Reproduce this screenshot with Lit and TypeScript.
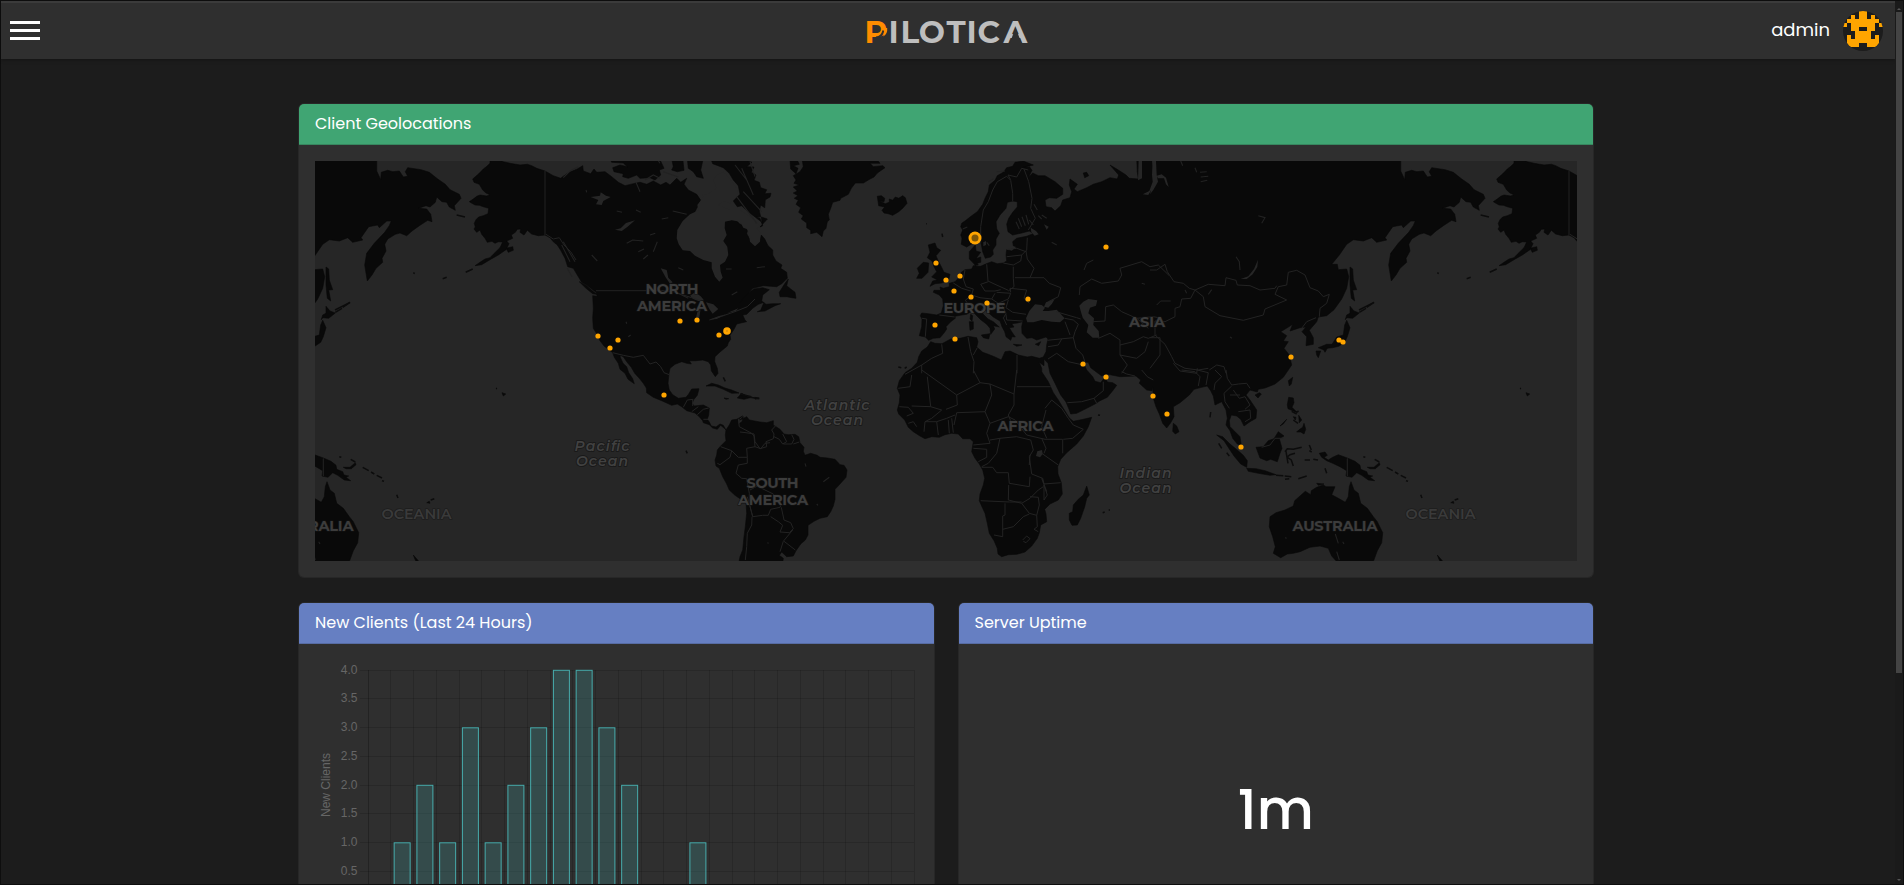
import { LitElement, html, css, svg } from 'lit';
import { customElement, property } from 'lit/decorators.js';

/** Map sheets are digitised at triple scale; each sheet has its own origin on the map. */
const SHEETS: Record<string, [number, number]> = {
  A: [-25, -66], B: [-25, 159], C: [425, -6], D: [425, 209], E: [835, -6], F: [835, 209],
};

/** Turns "A 1 2, 3 4 B 5 6" into SVG path data in map pixels. "|" starts a new sub-path. */
function trace(src: string, close: boolean): string {
  let origin = SHEETS.A;
  let out = '';
  for (const part of src.split('|')) {
    const tokens = part.replace(/,/g, ' ').trim().split(/\s+/);
    let first = true;
    for (let i = 0; i < tokens.length;) {
      if (SHEETS[tokens[i]]) { origin = SHEETS[tokens[i]]; i++; continue; }
      const x = origin[0] + Number(tokens[i]) / 3;
      const y = origin[1] + Number(tokens[i + 1]) / 3;
      out += `${first ? 'M' : 'L'}${x.toFixed(1)} ${y.toFixed(1)}`;
      first = false;
      i += 2;
    }
    if (close) out += 'Z';
  }
  return out;
}

const NORTH_AMERICA = `A 600 190, 600 205, 588 216, 580 222, 568 235, 548 252, 552 262, 568 268, 578 285, 588 294, 600 299, 590 303, 570 300, 560 304, 553 310, 538 320, 546 325, 555 330, 568 331, 580 335, 596 340, 594 356, 580 362, 566 366, 558 374, 553 385, 556 396, 552 402, 560 412, 570 405, 575 418, 585 430, 592 442, 606 439, 615 445, 625 440, 638 441, 630 458, 610 478, 600 488, 585 492, 570 502, 555 512, 575 509, 600 494, 625 480, 648 464, 657 446, 650 438, 668 430, 664 420, 676 412, 682 403, 692 402, 690 412, 702 420, 712 406, 725 417, 745 422, 765 420, 780 428, 790 440, 802 450, 812 466, 825 490, 833 515, 850 520, 862 540, 875 562, 890 570, 905 582, 918 592, 922 604, 908 602, 910 640, 908 670, 910 700, 920 716 B 922 45, 930 62, 942 78, 955 88, 968 98, 973 112, 985 130, 990 148, 1005 160, 1014 178, 1033 191, 1028 176, 1016 158, 1010 140, 999 130, 991 112, 990 106, 1000 110, 1010 125, 1024 142, 1034 160, 1048 175, 1060 190, 1069 204, 1070 218, 1090 232, 1115 242, 1145 256, 1162 252, 1175 260, 1190 272, 1215 279, 1228 290, 1238 302, 1240 308, 1258 314, 1268 324, 1282 328, 1292 316, 1303 325, 1308 330, 1300 316, 1290 312, 1278 321, 1264 318, 1258 306, 1252 298, 1256 285, 1258 264, 1240 255, 1213 258, 1206 250, 1212 238, 1222 226, 1227 206, 1205 207, 1196 222, 1188 232, 1165 235, 1148 224, 1138 210, 1134 190, 1137 160, 1140 145, 1155 133, 1175 125, 1190 130, 1204 132, 1198 122, 1218 122, 1238 120, 1255 125, 1262 135, 1264 152, 1276 170, 1284 160, 1282 145, 1274 125, 1275 110, 1290 96, 1312 78, 1315 68, 1322 58, 1320 46, 1332 28, 1340 12, 1356 8, 1370 5 C 15 495, 8 480, 20 478, 38 460, 55 448, 72 442, 62 466, 52 470, 75 468, 105 452, 122 446, 98 446, 78 448, 65 438, 68 420, 88 404, 68 398, 42 402, 22 416, 0 442, 15 425, 38 400, 70 392, 110 395, 125 386, 142 370, 140 352, 122 340, 126 330, 108 318, 98 300, 98 285, 84 272, 74 252, 64 240, 60 252, 54 266, 40 262, 28 250, 20 236, 24 220, 10 210, 0 208 A 1350 388, 1335 372, 1322 376, 1305 378, 1300 360, 1280 345, 1255 352, 1235 375, 1215 350, 1232 316, 1220 298, 1195 285, 1182 268, 1190 250, 1172 262, 1160 250, 1140 270, 1128 262, 1112 270, 1090 258, 1070 268, 1050 262, 1030 266, 1005 272, 985 262, 965 245, 945 230, 920 232, 912 222, 902 236, 880 228, 878 212, 862 222, 838 232, 820 244, 812 250, 790 242, 765 228, 740 220, 725 212, 712 208, 690 210, 660 205, 640 200, 620 190 |
A 960 190, 965 202, 1000 204, 1012 215, 990 210, 968 218, 972 230, 1000 236, 998 245, 1015 250, 1040 240, 1050 250, 1080 248, 1095 255, 1112 240, 1108 225, 1122 220, 1108 190 |
A 1145 190, 1150 215, 1145 225, 1162 230, 1182 226, 1178 190 | A 1192 190, 1195 220, 1210 230, 1220 245, 1240 250, 1232 225, 1240 190 |
A 1262 190, 1268 206, 1300 218, 1318 235, 1330 255, 1345 272, 1350 298, 1330 318, 1342 335, 1355 332, 1375 350, 1398 368, 1416 382, 1414 366, 1432 372 C 60 216, 68 212, 60 190, 48 186, 62 185, 58 168, 62 150, 74 158, 76 134, 90 126, 93 115, 74 116, 80 104, 62 98, 58 82, 42 76, 48 60, 34 52, 42 36, 20 35, 36 22, 0 10 |
A 1308 265, 1320 260, 1328 275, 1318 285, 1310 280 | A 1250 345, 1262 355, 1258 365, 1248 360 |
A 868 560, 890 572, 905 586, 920 598, 908 596, 888 580 |
C 120 425, 118 412, 135 385, 145 372, 140 392, 152 402, 165 412, 168 430, 155 428, 140 425 |
A 648 460, 668 455, 670 466, 655 472`;

const GREENLAND_ICELAND = `C 186 10, 190 35, 180 50, 160 62, 168 75, 162 85, 178 90, 160 96, 172 108, 160 114, 174 122, 163 130, 175 136, 168 148, 182 158, 176 172, 190 182, 184 192, 200 204, 200 218, 212 226, 212 236, 230 232, 246 245, 250 228, 258 220, 262 200, 268 195, 265 178, 272 160, 278 142, 300 136, 302 130, 325 118, 334 100, 346 84, 370 84, 390 72, 402 66, 412 54, 435 38, 428 32, 400 35, 390 25, 420 25, 408 10 |
C 150 15, 152 42, 168 56, 174 40, 160 32, 178 28, 170 12 |
C 412 124, 424 122, 434 130, 432 140, 418 138, 436 146, 448 142, 448 132, 458 136, 466 126, 476 130, 488 122, 496 128, 501 145, 488 160, 476 170, 458 181, 445 176, 432 174, 426 166, 434 156, 416 152`;

const SOUTH_AMERICA = `B 1308 330, 1306 345, 1308 362, 1290 380, 1282 390, 1280 405, 1275 420, 1278 438, 1288 445, 1298 470, 1310 492, 1318 510, 1335 526, 1350 536, 1368 545, 1370 580, 1366 620, 1362 650, 1358 690, 1350 710, 1346 730 D 128 580, 130 565, 118 556, 125 546, 140 560, 160 558, 168 542, 182 522, 196 510, 204 495, 204 466, 222 454, 240 445, 262 440, 272 425, 280 408, 285 388, 285 358, 300 342, 318 322, 321 300, 312 286, 300 284, 285 268, 262 264, 240 262, 232 256, 212 250, 195 256, 190 244, 192 232, 180 218, 176 200, 165 193, 145 194, 132 192, 120 178, 100 165, 100 152, 80 158, 60 156, 40 152, 28 150, 20 140, 0 150 B 1360 290, 1356 305, 1345 312, 1348 296, 1358 288, 1340 298, 1325 300, 1318 315`;

const AFRO_EURASIA = `C 665 205, 662 215, 668 225, 662 240, 666 250, 664 268, 680 276, 700 264, 715 256, 724 268, 728 290, 736 310, 752 306, 760 298, 758 285, 768 270, 768 252, 778 235, 770 222, 768 200, 780 180, 798 160, 802 142, 818 138, 832 140, 832 156, 818 172, 806 190, 800 208, 804 230, 818 240, 845 234, 868 228, 880 236, 860 244, 830 250, 818 260, 820 272, 830 276, 815 288, 800 284, 798 300, 800 318, 790 324, 772 326, 755 320, 735 328, 722 334, 708 334, 698 322, 688 312, 688 290, 706 270, 708 288, 722 292, 712 305, 706 318, 715 330, 700 332, 695 342, 675 344, 664 352, 655 370, 645 380, 628 385, 628 395, 610 400, 600 396, 602 406, 582 406, 580 412, 598 420, 608 432, 610 452, 604 474, 590 480, 565 476, 545 474, 541 482, 546 492, 545 515, 538 542, 556 546, 566 556, 580 550, 600 548, 612 534, 620 522, 618 515, 632 500, 646 490, 645 484, 665 480, 680 478, 696 468, 706 478, 722 494, 740 508, 750 520, 752 538, 764 522, 760 512, 778 516, 760 500, 744 492, 730 478, 722 466, 728 458, 742 470, 760 486, 780 498, 786 515, 794 530, 798 545, 812 556, 816 545, 826 546, 815 530, 808 518, 822 516, 815 506, 832 504, 848 500, 845 515, 846 535, 860 550, 876 548, 890 555, 918 546, 924 552, 920 570, 918 590, 910 606, 898 610, 875 604, 862 606, 835 600, 810 588, 795 590, 784 615, 765 606, 745 598, 728 592, 710 576, 714 560, 710 548, 684 544, 660 550, 632 552, 606 566, 585 565, 572 560, 562 576, 545 588, 536 605, 532 622, 515 640 D 495 8, 478 32, 472 55, 480 75, 478 98, 472 120, 476 132, 494 150, 505 172, 520 185, 540 198, 555 206, 575 200, 598 202, 615 194, 635 190, 655 192, 668 206, 690 206, 700 215, 695 245, 705 265, 718 282, 728 300, 734 325, 730 345, 720 372, 718 392, 735 430, 742 460, 748 490, 762 512, 772 535, 774 552, 785 560, 805 554, 830 553, 855 546, 875 528, 892 505, 898 488, 902 465, 920 455, 918 432, 914 418, 930 402, 955 390, 967 372, 964 338, 954 312, 953 290, 962 268, 980 248, 1010 222, 1030 198, 1045 170, 1055 142, 1030 148, 1000 154, 988 144, 970 115, 955 90, 940 68, 925 35, 905 5 C 905 640, 898 622, 912 632, 912 612, 924 625, 930 655 D 945 40, 962 75, 978 96, 988 120, 992 132, 1010 130, 1040 115, 1065 102, 1080 92, 1102 82, 1118 62, 1130 46, 1118 38, 1102 36, 1096 22, 1090 28, 1082 38, 1065 34, 1058 20, 1040 0 C 1036 636, 1028 622, 1045 622, 1052 638, 1068 650 D 1085 18, 1100 12, 1140 20, 1188 18, 1202 30, 1198 40, 1220 60, 1236 62 F 8 50, 10 85, 18 110, 28 132, 38 160, 50 174, 62 158, 72 140, 70 110, 90 98, 118 75, 132 58, 155 52, 172 48, 182 62, 190 78, 195 105, 215 95, 228 120, 232 145, 228 165, 240 182, 248 205, 262 222, 274 226, 270 200, 252 182, 240 170, 238 152, 244 135, 260 138, 272 148, 282 168, 300 155, 318 145, 320 120, 300 90, 288 75, 300 60, 322 66, 325 58, 345 54, 375 42, 400 22, 415 0 E 425 630, 418 600, 402 580, 415 560, 400 558, 410 542, 392 530, 412 518, 428 508, 420 528, 450 518, 468 516, 456 530, 470 545, 468 572, 490 568, 490 548, 478 526, 500 500, 505 486, 530 482, 552 464, 575 432, 590 400, 596 365, 590 342, 565 344, 562 328, 545 328, 568 300, 590 268, 610 254, 640 258, 665 248, 680 262, 710 255, 705 248, 728 215, 755 210, 760 218, 782 198, 796 198, 790 212, 776 232, 745 265, 722 295, 716 330, 724 378, 738 360, 750 340, 770 322, 768 310, 780 288, 776 268, 785 252, 808 238, 822 234, 842 242, 858 228, 880 212, 905 196, 918 200, 914 178, 902 162, 878 160, 900 152, 912 156, 928 142, 932 126, 948 140, 962 142, 970 156, 988 166, 985 152, 1005 130, 1000 118, 972 104, 958 88, 935 72, 910 52, 885 44, 845 38, 838 50, 845 64, 832 66, 820 48, 800 50, 785 46, 766 52, 764 74, 752 48, 752 10 C 1190 10, 1192 50, 1195 72, 1168 70, 1158 60, 1130 42, 1110 30, 1136 60, 1132 72, 1110 68, 1085 80, 1060 88, 1040 98, 1012 110, 1002 102, 1012 88, 990 72, 988 90, 995 110, 990 128, 968 135, 962 152, 945 168, 935 158, 918 155, 915 135, 928 128, 950 130, 968 118, 968 100, 945 80, 915 62, 895 62, 878 54, 865 68, 876 46, 866 32, 848 38, 880 30, 850 18, 825 22, 818 34, 800 38, 790 52, 772 62, 765 76, 748 90, 745 110, 736 128, 728 148, 712 170, 690 186, 678 196 |
C 565 270, 585 264, 590 278, 602 286, 588 302, 595 318, 604 335, 612 352, 630 358, 626 375, 605 384, 585 386, 570 394, 578 378, 592 374, 575 366, 590 350, 582 335, 576 318, 562 308, 570 292 |
C 550 322, 566 324, 564 352, 546 370, 530 370, 538 355, 532 340 | C 712 310, 722 306, 722 322, 708 326, 700 316 |
C 688 500, 700 500, 700 522, 690 526 | C 692 478, 698 482, 696 498, 690 492 | C 724 540, 750 536, 746 552, 730 548 | C 820 568, 846 570, 830 574 | C 886 568, 902 560, 896 572 |
C 1030 54, 1040 52, 1046 62, 1034 68 |
E 600 336, 608 342, 610 375, 620 404, 608 405, 614 438, 604 430, 600 390 | E 600 454, 612 468, 628 474, 608 490, 590 488, 586 494, 590 480, 600 475 | E 590 496, 600 518, 592 545, 584 562, 566 574, 548 578, 530 580, 520 584, 505 578, 530 568, 546 568, 560 546, 580 540, 584 510 | E 498 588, 512 588, 505 608, 500 600 | E 520 582, 532 580, 525 592`;

const SOUTHERN_ISLANDS = `F 415 32, 428 22, 424 42, 418 48 | F 315 75, 328 68, 334 72, 324 84 | F 416 82, 430 84, 432 98, 426 112, 434 120, 442 128, 428 122, 414 116, 412 104 | F 446 180, 458 172, 462 160, 467 178, 462 192, 452 186, 440 186 | F 430 140, 438 142, 436 150 | F 446 136, 455 150, 448 158 | F 390 168, 410 148, 400 162 | F 70 160, 80 168, 87 185, 76 192, 68 184 |
F 200 195, 218 200, 240 222, 262 240, 280 256, 292 272, 290 292, 272 282, 252 258, 240 240, 222 212 | F 290 295, 318 296, 345 302, 378 314, 360 316, 325 310, 295 304 |
F 318 232, 340 230, 355 212, 372 206, 385 185, 402 198, 388 206, 396 235, 390 250, 382 275, 362 268, 350 272, 330 264 |
F 508 250, 525 246, 532 256, 522 262, 535 270, 548 262, 565 254, 592 264, 615 274, 630 286, 632 298, 650 305, 655 318, 674 332, 655 330, 635 316, 620 308, 606 322, 588 318, 590 302, 570 290, 548 280, 530 272, 515 262 |
F 652 292, 672 292, 688 278, 690 284, 676 296, 660 296 | F 640 312, 668 318, 660 322 |
F 360 440, 378 428, 405 420, 430 408, 434 392, 450 378, 466 364, 482 374, 484 362, 500 352, 520 345, 528 350, 555 350, 545 374, 565 385, 586 397, 595 380, 598 350, 603 335, 612 360, 625 370, 632 400, 652 415, 670 440, 682 455, 698 488, 695 518, 682 542, 668 580, 565 580, 545 558, 535 535, 510 528, 480 532, 450 545, 430 550, 412 552, 392 563, 370 550, 376 530, 368 500, 358 470 |
F 500 340, 522 342, 505 346 | F 862 555, 868 562, 877 572, 874 580, 868 570 |
D 988 430, 998 425, 1000 405, 1015 388, 1030 375, 1040 348, 1048 375, 1040 385, 1034 410, 1022 445, 1012 465, 996 466, 988 450 |
B 1248 198, 1265 190, 1285 195, 1305 204, 1325 210, 1347 219, 1325 220, 1300 208, 1275 198 | B 1342 234, 1355 220, 1370 228, 1385 232, 1362 238 | B 1302 234, 1316 236, 1308 238 | B 1394 232, 1408 234, 1396 238 | B 636 218, 647 222, 640 228 | F 902 398, 910 394, 912 400`;

const WATER = `A 1160 430, 1162 405, 1178 378, 1200 358, 1226 346, 1222 330, 1240 306, 1235 300, 1255 296, 1280 280, 1270 255, 1280 240, 1300 230, 1318 250, 1340 280, 1345 300, 1320 325, 1300 318, 1285 330, 1320 345, 1350 345, 1395 375, 1410 395, 1400 400, 1412 415, 1410 440, 1395 454, 1380 440, 1376 412, 1370 402, 1360 398, 1350 380, 1325 376, 1305 380, 1304 400, 1310 420, 1300 438, 1312 455, 1315 480, 1305 500, 1290 510, 1292 530, 1298 548, 1288 560, 1275 545, 1265 520, 1265 502, 1240 495, 1215 482, 1200 468, 1178 466, 1166 448 |
A 1200 602, 1215 592, 1232 604, 1242 616, 1225 618, 1210 612 | A 1225 638, 1232 640, 1228 668, 1218 668 | A 1248 622, 1270 628, 1285 642, 1268 656, 1258 642 | A 1258 674, 1285 664, 1308 658, 1280 672 | A 1312 654, 1345 640, 1338 648 | A 1112 520, 1130 525, 1135 548, 1148 562, 1140 566, 1126 545 |
A 902 306, 930 302, 932 292, 948 302, 962 306, 940 318, 935 330, 918 328, 925 315 | A 975 404, 992 400, 1008 384, 1035 376, 1012 396, 995 408 |
C 858 490, 868 468, 885 448, 905 450, 915 458, 908 468, 925 468, 950 464, 974 490, 960 502, 935 500, 905 495, 880 502, 862 502 | C 912 455, 918 442, 944 432, 936 446, 925 458 | C 1018 452, 1030 440, 1045 432, 1072 436, 1068 452, 1050 458, 1045 475, 1062 490, 1060 510, 1076 528, 1078 548, 1058 548, 1040 532, 1045 510, 1028 488, 1022 468 |
C 872 218, 888 228, 896 238, 884 242, 874 232 | C 912 208, 926 215, 920 224 | C 730 262, 738 258, 738 270, 730 274 |
D 892 244, 906 240, 908 252, 900 262, 888 258 | E 272 372, 295 364, 312 342, 324 314, 322 336, 308 358, 290 372 |
C 1238 10, 1240 50, 1250 60, 1245 85, 1225 120, 1208 118, 1228 108, 1238 80, 1236 60 | E 6 15, 18 18, 20 60, 24 80, 10 105, 0 118, 10 80 | C 1196 10, 1206 18, 1206 70, 1194 76 | E 20 62, 35 58, 48 68, 56 96, 48 88, 42 70, 24 70`;

/** Thin coastal features, drawn in the land colour. */
const ISLAND_CHAINS = `A 458 551, 470 547 | A 527 532, 548 522 | A 135 645, 180 622 | E 628 472, 648 460 | E 650 457, 672 442 | F 378 316, 400 317 | F 404 318, 424 320 | F 405 328, 418 326 | F 445 326, 470 318 | F 405 245, 412 236, 430 238, 455 232 | F 408 244, 414 280 | F 410 262, 420 254, 435 250 | F 412 262, 424 270, 430 288 | F 478 225, 484 240 | F 478 242, 485 246 | F 464 270, 480 270 | F 490 268, 504 270 | F 525 295, 530 310 | F 710 292, 728 302 | F 735 306, 745 312 | F 752 316, 768 324 | F 768 332, 774 334 | F 812 374, 816 384 | F 914 390, 925 386 | F 206 220, 215 235 | F 230 248, 238 258 | F 640 260, 646 262 | F 674 268, 688 276 | F 425 124, 440 132 | F 438 126, 446 124 | F 430 150, 444 160 | F 182 126, 180 142 | B 1300 172, 1306 184 | C 475 636, 484 638 | C 494 640, 500 636 | C 558 206, 560 206 | C 606 236, 608 246 | D 1088 428, 1094 426 | D 1106 420, 1110 420 | D 1074 135, 1080 136 | B 618 205, 621 206 | B 1188 392, 1192 400 | A 500 360, 525 366 | A 370 533, 374 536 | D 30 82, 58 86 | D 0 72, 34 80`;

const BORDERS = `A 765 228, 765 420 | A 768 418, 790 432, 808 428, 822 450, 842 470, 858 495 | A 918 587, 1115 587, 1150 590, 1180 600, 1205 608, 1235 618 | A 1258 675, 1295 664, 1340 648, 1372 635, 1395 612 | B 968 98, 1000 106, 1030 112, 1060 106, 1080 132, 1098 126, 1112 140, 1122 158, 1138 164 |
B 1180 262, 1192 240, 1210 238 | B 1208 238, 1208 258 | B 1205 275, 1225 260 | B 1222 284, 1240 268, 1256 264 | B 1240 298, 1254 298 |
B 1345 296, 1348 320, 1385 340, 1392 348, 1395 380, 1370 385, 1372 412 | B 1292 380, 1325 392, 1345 412, 1372 412 | B 1325 392, 1320 412, 1290 434, 1282 430 | B 1372 412, 1372 430, 1345 435, 1338 460, 1355 475, 1370 476 | B 1395 380, 1412 386, 1425 370, 1440 368 | B 1370 476, 1378 520, 1378 550, 1388 590 |
D 0 186, 18 188, 42 192, 45 215, 60 236, 80 230, 78 215, 100 206, 102 192, 95 180, 108 166 | D 102 200, 118 208, 128 222, 140 215, 128 192 | D 130 222, 155 222, 162 208, 155 194 | D 160 222, 178 216 | D 30 360, 52 348, 75 360, 100 372, 108 396, 124 402, 120 412, 92 418, 85 436, 68 436, 38 440, 30 410, 22 380 | D 36 440, 35 465, 22 490, 20 530, 16 570 | D 92 440, 115 455, 128 466, 120 486, 148 488, 160 476, 152 458, 132 450, 124 412 | D 158 480, 130 514, 120 545 | D 132 514, 166 540 |
C 722 266, 722 215, 730 165, 745 140, 758 105, 772 80, 800 64, 812 76, 818 115, 818 138 | C 812 74, 804 60, 830 66, 845 40, 865 45 | C 852 42, 866 80, 876 130, 872 160, 886 190, 865 225 | C 862 248, 860 285, 845 300, 800 305 | C 800 284, 830 280, 858 290 | C 790 324, 820 330, 842 318, 845 300 | C 820 335, 820 370, 822 395, 805 408 | C 858 288, 862 312, 882 340, 870 368, 825 368 | C 740 328, 744 378, 765 388, 805 406 | C 675 345, 670 372, 678 395, 700 402, 695 420 | C 722 388, 745 380 | C 722 388, 735 408, 765 408, 782 404 | C 640 384, 665 400, 692 408 | C 695 420, 720 428, 755 432, 765 415 | C 680 472, 685 448, 676 436, 695 420 | C 755 432, 775 445, 805 432, 812 415, 770 412 | C 812 412, 810 400, 860 405, 852 430, 868 445 | C 870 368, 912 368, 928 385, 962 398, 955 425, 925 440 | C 805 435, 798 458, 818 472, 858 478 | C 765 455, 785 450, 798 475, 790 490 | C 798 478, 800 495, 848 498 | C 790 488, 800 510 | C 546 490, 560 492, 556 545 | C 598 480, 644 486 |
C 974 490, 1000 495, 1015 508, 1005 530, 1000 548, 960 552, 922 556 | C 948 470, 1010 488, 1022 492 | C 975 500, 990 540 | C 924 575, 955 570, 965 552 | C 924 612, 950 595, 985 620, 1030 630 | C 1000 548, 1008 580, 1028 600, 1035 622 | C 1075 550, 1110 535, 1140 555, 1140 600, 1162 630, 1145 655 | C 1140 570, 1180 560, 1210 545, 1225 550, 1250 540 | C 1058 500, 1095 498, 1097 455, 1120 450, 1145 470, 1190 490, 1225 520 | C 1140 600, 1190 610, 1215 590, 1225 560 | C 1018 420, 1020 395, 1055 372, 1085 385, 1135 378, 1145 360, 1140 340, 1205 320, 1230 335, 1255 330, 1288 362 | C 1032 345, 1040 325, 1060 315 | C 1190 490, 1240 485, 1265 490 |
E 0 345, 20 345, 45 328, 52 350, 72 380, 100 385, 118 400, 135 405, 175 388, 225 392, 228 368, 258 376, 262 390, 300 392, 330 405, 375 400, 380 392 | E 135 405, 160 425, 165 455, 210 482, 280 496, 340 480, 345 462, 410 435, 375 418, 385 395, 410 390, 415 352, 440 346, 465 360, 480 398, 505 408, 520 425, 538 418, 530 445, 510 460, 508 485 | E 135 405, 122 430, 95 432, 90 455, 75 460, 75 485, 45 500, 15 498, 15 540, 45 568 | E 20 450, 32 438, 62 438 | E 0 548, 30 548, 30 600, 0 640 | E 45 568, 65 605, 75 625, 105 640, 145 645, 175 640 | E 70 625, 90 648, 140 655, 142 640 | E 178 645, 200 630, 222 635, 228 655 | E 455 520, 470 500, 498 488 |
F 95 0, 135 5, 150 20, 145 48 | F 142 0, 175 8, 168 45 | F 195 0, 215 20, 195 40, 192 60 | F 228 0, 232 25, 245 45, 265 42, 290 40, 300 55 | F 245 48, 222 70, 225 95, 238 115 | F 250 60, 268 85, 285 80, 300 105, 285 118 | F 240 75, 270 75 | F 265 125, 300 120, 302 145, 285 155 | F 335 232, 360 225, 375 205, 400 205 | F 592 265, 592 318 |
C 605 568, 608 595, 575 610, 545 630, 545 655 | C 684 546, 692 590, 702 620, 700 655 | C 712 578, 700 600 | C 831 600, 831 655 | C 545 630, 495 658 |
D 545 0, 650 75, 720 38, 700 0 | D 515 15, 510 50, 475 55 | D 562 20, 572 110, 515 108 | D 650 75, 652 105, 618 118 | D 572 110, 605 120, 575 145, 555 155, 552 185 | D 720 38, 750 42, 822 72, 830 0 | D 750 42, 755 75, 735 125, 650 128, 642 165 | D 831 50, 932 50 | D 822 72, 822 105, 805 135, 815 160 | D 735 125, 750 160, 740 190, 750 220, 700 225 | D 750 160, 805 140, 825 150 | D 555 155, 590 155, 620 145, 645 135 | D 590 155, 595 195 | D 625 150, 628 190 | D 635 145, 640 188 | D 505 160, 520 155, 530 170 | D 478 110, 505 112, 520 130, 500 138 | D 750 210, 780 205, 830 200, 872 210 | D 780 205, 770 250, 745 280, 725 290 | D 700 235, 740 238, 740 262, 715 275 | D 725 292, 758 292, 770 308, 805 308, 808 340, 868 350, 870 320 | D 872 210, 880 240, 868 260, 875 312, 908 325, 912 342, 962 338 | D 905 250, 955 285 | D 905 205, 918 235, 912 250 | D 825 150, 860 195, 915 208, 968 208, 968 250 | D 915 115, 935 90, 965 115, 985 145, 1000 165, 1030 178, 998 205, 970 208 | D 918 120, 905 170, 920 205 | D 806 345, 805 390, 845 400, 870 385, 895 360, 910 350 | D 722 392, 808 396, 845 396 | D 795 400, 795 435, 788 438, 788 500, 762 495 | D 845 400, 868 430, 890 436, 898 405, 895 382, 870 380 | D 788 478, 820 470, 850 440, 868 432 | D 890 436, 892 470, 882 478, 895 485 | D 848 510, 860 498, 870 506, 858 518, 850 514 | D 982 98, 1025 95, 1062 85, 1090 62, 1090 35 | D 1062 85, 1070 100 | D 912 345, 922 375, 912 390, 912 345 |
D 1145 5, 1160 12, 1185 18 | D 1205 0, 1222 20, 1240 30`;

/** Small inland lakes and inlets, drawn in the water colour. */
const INLETS = `A 1010 445, 1028 435, 1060 438 | A 1045 470, 1062 462 | A 1090 470, 1102 440 | A 1060 492, 1074 480 | A 1115 372, 1135 368 | A 1148 348, 1190 358 | A 905 480, 922 498 | A 980 348, 996 352 | A 1038 345, 1052 352 | A 888 285, 890 292 | A 1308 522, 1325 522 | A 1400 518, 1425 515 | A 1325 600, 1342 590 | A 1080 420, 1096 415 | A 1008 680, 1010 686 | A 1165 518, 1180 525 | A 1195 610, 1165 595 | A 820 248, 840 228, 865 215 | A 1100 190, 1110 205 | A 1120 230, 1165 246 | A 1065 255, 1090 240, 1110 250 | A 1038 262, 1050 290 | A 1335 210, 1370 255 | A 1355 220, 1390 300 | A 1380 200, 1395 245 | A 1340 305, 1400 385 | A 1360 290, 1415 350 | A 815 450, 840 500 | A 820 440, 855 500 | A 832 520, 846 545 |
C 835 190, 845 215 | C 846 185, 856 212 | C 858 180, 866 208 | C 868 195, 880 210 | C 828 200, 838 222 | C 895 182, 905 192 | C 882 148, 892 165 | C 905 180, 920 190 | C 935 262, 950 270 | C 745 80, 760 72 | C 770 50, 795 48 | C 668 222, 682 216 | C 740 262, 748 272 | C 1205 385, 1215 388 |
E 135 38, 140 52 | E 150 52, 170 50 | E 152 66, 175 64 | E 152 80, 172 76 | E 92 18, 98 32 | E 258 305, 268 320, 270 345 | E 325 182, 345 188, 335 205 | E 240 546, 246 550 | E 105 405, 110 415 | E 175 418, 185 404 | D 870 255, 868 285 | D 905 325, 920 365 | D 250 335, 268 322 | D 230 402, 234 406 | D 82 518, 86 520 | D 195 280, 198 290 | B 1015 50, 1022 45 | F 556 492, 565 520 | F 560 545, 568 570 | F 578 515, 582 522 | F 405 503, 410 505`;

const PINS: Array<[number, number, number?]> = [
  [598, 336], [618, 340], [610, 348], [680, 321], [697, 320], [719, 335], [664, 395],
  [936, 263], [946, 280], [960, 276], [954, 291], [971, 297], [987, 303], [1028, 299], [935, 325], [955, 339],
  [1106, 247], [1083, 364], [1106, 377], [1153, 396], [1167, 414], [1241, 447], [1291, 357], [1339, 340], [1343, 342],
  [727, 331, 1], [975, 238, 2],
];

interface Label { t: string; x: number; y: number; w: number; k: string }
const LABELS: Label[] = [
  { t: 'NORTH', x: 672, y: 294, w: 53, k: 'land' }, { t: 'AMERICA', x: 672, y: 311, w: 70, k: 'land' },
  { t: 'SOUTH', x: 772.5, y: 487.5, w: 52, k: 'land' }, { t: 'AMERICA', x: 773, y: 504.5, w: 70, k: 'land' },
  { t: 'EUROPE', x: 974.5, y: 313, w: 62, k: 'land' }, { t: 'ASIA', x: 1147, y: 327, w: 36, k: 'land' },
  { t: 'AFRICA', x: 1025.5, y: 430.5, w: 56, k: 'land' }, { t: 'AUSTRALIA', x: 1335, y: 531, w: 85, k: 'land' },
  { t: 'AUSTRALIA', x: 311, y: 531, w: 85, k: 'land' },
  { t: 'OCEANIA', x: 416.5, y: 519, w: 70, k: 'region' }, { t: 'OCEANIA', x: 1440.5, y: 519, w: 70, k: 'region' },
  { t: 'Pacific', x: 602, y: 451, w: 55, k: 'sea' }, { t: 'Ocean', x: 602, y: 466, w: 52, k: 'sea' },
  { t: 'Atlantic', x: 837, y: 410, w: 65, k: 'sea' }, { t: 'Ocean', x: 837, y: 425, w: 52, k: 'sea' },
  { t: 'Indian', x: 1145.5, y: 478, w: 52, k: 'sea' }, { t: 'Ocean', x: 1145.5, y: 493, w: 52, k: 'sea' },
];

@customElement('geo-map')
class GeoMap extends LitElement {
  static styles = css`
    :host { display: block; height: 400px; background: #262626; overflow: hidden; }
    svg { display: block; width: 100%; height: 100%; }
    .earth { fill: #090909; stroke: #090909; stroke-width: 0.6; stroke-linejoin: round; }
    .water { fill: #262626; }
    .border { fill: none; stroke: #232323; stroke-width: 1; stroke-linejoin: round; }
    .chain { fill: none; stroke: #0c0c0c; stroke-width: 1.5; }
    .inlet { fill: none; stroke: #222; stroke-width: 1.1; }
    text { font-family: Montserrat, Inter, sans-serif; text-anchor: middle; paint-order: stroke; stroke-linejoin: round; }
    .land { font-size: 14.5px; font-weight: 700; fill: #3c3c3c; stroke: #131313; stroke-width: 1.2px; }
    .region { font-size: 14.5px; font-weight: 600; fill: #3a3a3a; stroke: #1d1d1d; stroke-width: 1.6px; }
    .sea { font-size: 14px; font-style: italic; font-weight: 600; fill: #414141; stroke: #191919; stroke-width: 1.8px; }
    .pin { fill: orange; }
    .core { fill: #7e5608; }
    .soft { fill: #d98f0c; }
  `;
  render() {
    return html`<svg viewBox="0 0 1262 400">
      <defs>
        <g id="world">
          <path class="earth" d=${trace([NORTH_AMERICA, GREENLAND_ICELAND, SOUTH_AMERICA, AFRO_EURASIA, SOUTHERN_ISLANDS].join('|'), true)}></path>
          <path class="water" d=${trace(WATER, true)}></path>
          <path class="inlet" d=${trace(INLETS, false)}></path>
          <path class="border" d=${trace(BORDERS, false)}></path>
          <path class="chain" d=${trace(ISLAND_CHAINS, false)}></path>
        </g>
      </defs>
      <use href="#world" x="-1024"></use>
      <use href="#world" x="1024"></use>
      <use href="#world"></use>
      ${LABELS.map((l) => svg`<text class=${l.k} x=${l.x - 315} y=${l.y - 161} textLength=${l.w}>${l.t}</text>`)}
      ${PINS.map(([x, y, size = 0]) => svg`
        <circle class="pin" cx=${x - 315} cy=${y - 161} r=${[2.6, 3.8, 6.5][size]}></circle>
        ${size ? svg`<circle class=${size === 2 ? 'core' : 'soft'} cx=${x - 315} cy=${y - 161} r=${size === 2 ? 3.5 : 1}></circle>` : ''}`)}
    </svg>`;
  }
}

@customElement('clients-chart')
class ClientsChart extends LitElement {
  @property({ attribute: false }) values = [0, 1, 2, 1, 3, 1, 2, 3, 4, 4, 3, 2, 0, 0, 1];
  static styles = css`
    :host { display: block; }
    svg { display: block; width: 602px; height: 300px; }
    .grid { stroke: rgba(0, 0, 0, 0.13); }
    .axis { stroke: rgba(0, 0, 0, 0.25); }
    .bar { fill: rgba(75, 192, 192, 0.2); stroke: rgb(75, 192, 192); stroke-opacity: 0.85; }
    text { font: 12px "Liberation Sans", Arial, sans-serif; fill: #666; text-anchor: end; }
    .title { text-anchor: middle; }
  `;
  render() {
    const left = 53.2, step = 22.75, zero = 240, unit = 57.5;
    return html`<svg viewBox="0 0 602 300">
      ${Array.from({ length: 25 }, (_, i) => {
        const x = Math.floor(left + i * step) + 0.5;
        return svg`<line class=${i ? 'grid' : 'axis'} x1=${x} x2=${x} y1="10" y2="248"></line>`;
      })}
      ${Array.from({ length: 9 }, (_, i) => {
        const y = Math.floor(zero - i * unit / 2) + 0.5;
        return svg`<line class="grid" x1="45" x2="599" y1=${y} y2=${y}></line>
          <text x="42.5" y=${y + 3.5}>${(i / 2).toFixed(1)}</text>`;
      })}
      ${this.values.map((v, i) => v ? svg`<rect class="bar" x=${left + i * step + 3.2} y=${zero + 0.3 - v * unit} width="16" height=${v * unit}></rect>` : '')}
      <text class="title" transform="translate(15 125) rotate(-90)">New Clients</text>
    </svg>`;
  }
}

@customElement('dash-card')
class DashCard extends LitElement {
  @property() heading = '';
  @property() tone = 'blue';
  static styles = css`
    :host { display: flex; flex-direction: column; background: #2f2f2f; border-radius: 5px; box-shadow: 0 0 0 1px #272727; overflow: hidden; }
    .head { height: 38px; flex: none; display: flex; align-items: center; padding: 0 16px 2px; color: #fff; font-size: 16px; }
    .green { background: #40a573; border-bottom: 1px solid #37875f; }
    .blue { background: #667fc2; border-bottom: 1px solid #576ca3; }
    .body { padding: 16px; flex: 1; display: grid; }
  `;
  render() {
    return html`<div class="head ${this.tone}">${this.heading}</div><div class="body"><slot></slot></div>`;
  }
}

const AVATAR = [
  '....##....',
  '..#.##.#..',
  '.########.',
  '#.######.#',
  '..##..##..',
  '...####...',
  '.#.####.#.',
  '.########.',
  '.###..###.',
  '..........',
];

@customElement('app-root')
class AppRoot extends LitElement {
  static styles = css`
    :host { display: block; height: 885px; overflow: hidden; font-family: Poppins, Inter, sans-serif; color: #fff; background: #1c1c1c; }
    .window { box-sizing: border-box; height: 885px; display: flex; border: 1px solid #0e0e0e; background: #1c1c1c; }
    .page { flex: 1; min-width: 0; display: flex; flex-direction: column; }
    .bar { box-sizing: border-box; flex: none; height: 58px; display: grid; grid-template-columns: 1fr auto 1fr; align-items: center; background: #2f2f2f; border-top: 2px solid #3b3b3b; padding: 0 12px 0 9px; box-shadow: 0 1px 4px rgba(0, 0, 0, 0.3); }
    .menu { display: flex; flex-direction: column; gap: 5px; width: 30px; margin-bottom: 1px; }
    .menu i { height: 3px; background: #fff; }
    .logo { display: block; width: 166px; height: 46px; overflow: visible; }
    .logo text { font-family: Montserrat, Inter, sans-serif; font-weight: 700; font-size: 31px; fill: #bebebe; }
    .logo .p { fill: #ff8c00; }
    .logo .cut { fill: #2f2f2f; }
    .logo .slit { fill: none; stroke: #2f2f2f; stroke-width: 2; }
    .logo .tail { fill: #ff8c00; }
    .user { justify-self: end; display: flex; align-items: center; gap: 13px; font-size: 18px; }
    .user span { padding-bottom: 3px; }
    .avatar { display: block; width: 40px; height: 40px; border-radius: 50%; background: #1c1c1c; }
    .avatar rect { fill: orange; }
    .content { flex: 1; min-height: 0; overflow: hidden; padding: 45px 302px 0 298px; display: flex; flex-direction: column; gap: 26px; }
    .map { flex: none; height: 473px; }
    .row { flex: none; display: grid; grid-template-columns: 1fr 1fr; gap: 25px; height: 360px; }
    .uptime { display: grid; place-items: center; align-self: start; height: 299px; font-size: 55px; font-weight: 500; }
    .scroll { width: 8px; display: flex; flex-direction: column; align-items: center; padding: 7px 0 3px; gap: 2px; background: #1a1a1a; }
    .arrow { border: 2px solid transparent; border-top-width: 0; border-bottom-color: #555; }
    .arrow.down { border-width: 2px 2px 0; border-top-color: #555; }
    .thumb { width: 6px; height: 661px; background: #444; margin-bottom: auto; }
  `;
  render() {
    return html`<div class="window">
      <div class="page">
        <header class="bar">
          <div class="menu"><i></i><i></i><i></i></div>
          <svg class="logo" viewBox="0 0 166 46">
            <text class="p" x="0.6" y="34.5">P</text>
            <path class="slit" d="M12 29.6Q18 29 19.4 22.5"></path>
            <path class="tail" d="M23.2 20Q23.8 26 19.2 28.4Q20.8 24.5 20 20Z"></path>
            ${[['I', 24.6], ['L', 36.6], ['O', 54.8], ['T', 82.6], ['I', 102.6], ['C', 113.6], ['A', 139.6]].map(([c, x]) => svg`<text x=${x} y="34.5">${c}</text>`)}
            <path class="cut" d="M145.7 35L151.6 20L157.5 35Z"></path>
          </svg>
          <div class="user"><span>admin</span>
            <svg class="avatar" viewBox="0 0 40 40" shape-rendering="crispEdges">
              ${AVATAR.flatMap((row, y) => [...row].map((c, x) => c === '#' ? svg`<rect x=${x * 4} y=${y * 4} width="4" height="4"></rect>` : ''))}
            </svg>
          </div>
        </header>
        <main class="content">
          <dash-card class="map" heading="Client Geolocations" tone="green"><geo-map></geo-map></dash-card>
          <div class="row">
            <dash-card heading="New Clients (Last 24 Hours)"><clients-chart></clients-chart></dash-card>
            <dash-card heading="Server Uptime"><div class="uptime">1m</div></dash-card>
          </div>
        </main>
      </div>
      <div class="scroll"><div class="arrow"></div><div class="thumb"></div><div class="arrow down"></div></div>
    </div>`;
  }
}
